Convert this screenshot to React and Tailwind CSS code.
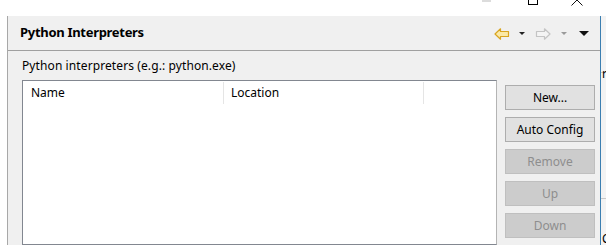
import { Fragment } from "react";

const buttons = [
  { label: "New...", disabled: false },
  { label: "Auto Config", disabled: false },
  { label: "Remove", disabled: true },
  { label: "Up", disabled: true },
  { label: "Down", disabled: true },
];

function NavArrow({ active, forward }) {
  return (
    <svg width="16" height="12" viewBox="0 0 16 12" className={forward ? "-scale-x-100" : ""}>
      <path
        d="M1 6 L6.5 0.8 L6.5 3.5 L14.5 3.5 L14.5 8.5 L6.5 8.5 L6.5 11.2 Z"
        fill={active ? "#fbe9a6" : "#f4f4f4"}
        stroke={active ? "#d9a520" : "#c4c4c4"}
        strokeWidth="1.2"
        strokeLinejoin="round"
      />
    </svg>
  );
}

function Caret({ color, w = 6, h = 3 }) {
  return (
    <svg width={w} height={h} viewBox={`0 0 ${w} ${h}`}>
      <path d={`M0 0 L${w} 0 L${w / 2} ${h} Z`} fill={color} />
    </svg>
  );
}

export default function App() {
  return (
    <div className="relative flex h-[245px] w-[606px] flex-col overflow-hidden bg-white font-['Noto_Sans','Liberation_Sans',sans-serif] text-black">
      {/* window title strip */}
      <div className="relative h-[16px] shrink-0 bg-white">
        <div className="absolute left-[482px] top-0 h-[2px] w-[9px] bg-[#dcdcdc]" />
        <div className="absolute left-[528px] top-[-6px] h-[11px] w-[10px] border border-black" />
        <svg className="absolute left-[571px] top-0" width="12" height="6" viewBox="0 0 12 6">
          <path d="M0.5 5.5 L6 0 L11.5 5.5" fill="none" stroke="#111" strokeWidth="1" />
        </svg>
      </div>

      <div className="flex min-h-0 flex-1">
        <div className="w-[7px] shrink-0 bg-white" />
        <div className="flex min-w-0 flex-1 flex-col border-l border-[#a8a8a8] bg-[#f0f0f0]">
          {/* header */}
          <div className="flex h-[35px] shrink-0 items-center justify-between border-b border-[#a0a0a0] pl-[12px] pr-[11px]">
            <span className="text-[13px] font-bold tracking-[-0.3px]">Python Interpreters</span>
            <div className="flex items-center pt-[1px]">
              <NavArrow active />
              <span className="ml-[9px]"><Caret color="#222" /></span>
              <span className="ml-[10px]"><NavArrow forward /></span>
              <span className="ml-[10px]"><Caret color="#9a9a9a" /></span>
              <span className="ml-[12px]"><Caret color="#111" w={10} h={5} /></span>
            </div>
          </div>

          {/* content */}
          <div className="flex min-h-0 flex-1 flex-col pl-[14px] pt-[7px]">
            <div className="h-[22px] text-[12px] leading-[16px] tracking-[0.1px]">Python interpreters (e.g.: python.exe)</div>
            <div className="flex min-h-0 flex-1 gap-[8px]">
              <div className="flex w-[475px] flex-col border border-[#828790] border-r-[#b4b4b4] bg-white">
                <div className="flex h-[24px] text-[12px] leading-[24px]">
                  {["Name", "Location", ""].map((h, i) => (
                    <Fragment key={i}>
                      <div className={i === 2 ? "flex-1" : i === 0 ? "w-[200px] pl-[8px]" : "w-[199px] pl-[7px]"}>{h}</div>
                      {i < 2 && <div className="my-[1px] w-px bg-[#e5e5e5]" />}
                    </Fragment>
                  ))}
                </div>
              </div>
              <div className="flex w-[90px] flex-col gap-[7px] pt-[5px]">
                {buttons.map((b) => (
                  <div
                    key={b.label}
                    className={
                      b.disabled
                        ? "flex h-[25px] items-center justify-center border border-[#bfbfbf] bg-[#cccccc] text-[12px] text-[#8e8e8e]"
                        : "flex h-[25px] items-center justify-center border border-[#adadad] bg-[#e1e1e1] text-[12px]"
                    }
                  >
                    {b.label}
                  </div>
                ))}
              </div>
            </div>
          </div>
        </div>
        <div className="w-px shrink-0 bg-[#3c7fb1]" />
        <div className="relative w-[5px] shrink-0 bg-[#f3f3f3]">
          <div className="absolute left-0 top-[56px] h-px w-full bg-[#c8c8c8]" />
          <div className="absolute left-[1px] top-[51px] text-[12px] leading-[14px]">r</div>
          <div className="absolute left-0 top-[182px] h-px w-full bg-[#c8c8c8]" />
          <div className="absolute left-[1px] top-[216px] text-[12px] leading-[14px]">C</div>
        </div>
      </div>
    </div>
  );
}
